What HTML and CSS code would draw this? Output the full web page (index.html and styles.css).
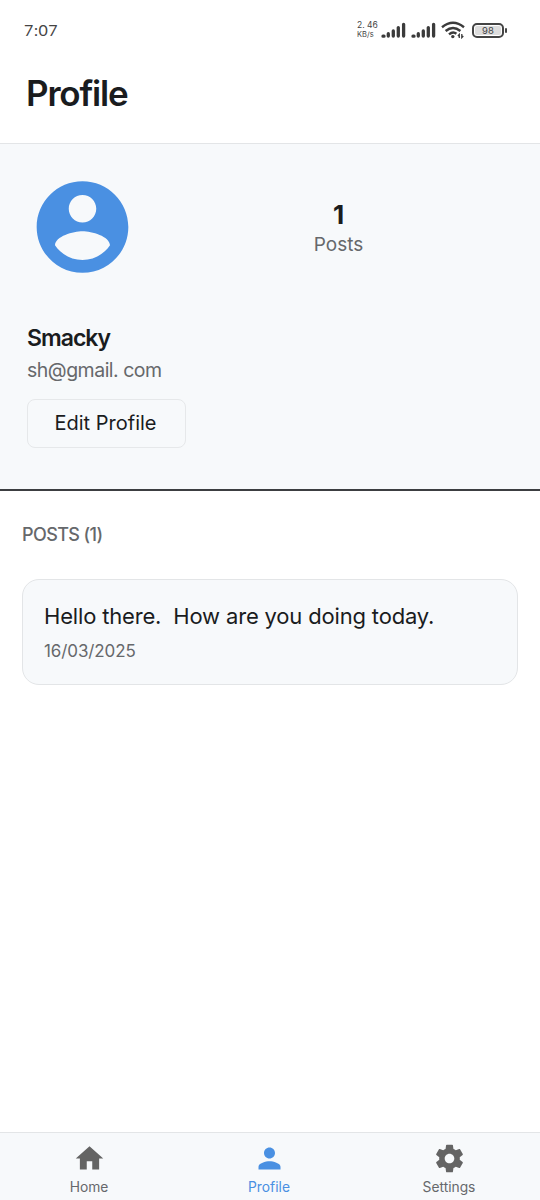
FILE: index.html
```html
<!DOCTYPE html>
<html lang="en">
<head>
<meta charset="utf-8">
<title>Profile</title>
<link rel="stylesheet" href="styles.css">
</head>
<body>
<div class="app">
  <div class="status">
    <span class="clock">7:07</span>
    <div class="indicators">
      <div class="speed"><span class="rate">2. 46</span><span class="unit">KB/s</span></div>
      <svg class="signal" width="25" height="16" viewBox="0 0 25 16"><path d="M2 14.200h1M7.300 14v-2.300M12.300 14V8.900M17.300 14V5.600M22.600 14V2.300"/></svg>
      <svg class="signal" width="25" height="16" viewBox="0 0 25 16"><path d="M2 14.200h1M7.300 14v-2.300M12.300 14V8.900M17.300 14V5.600M22.600 14V2.300"/></svg>
      <svg class="wifi" width="24" height="18" viewBox="0 0 24 18"><path d="M1 6.200Q12-2.800 23 6.200M4.600 10Q12 3.800 19.400 10M8 13.400Q12 10 15.400 12.800"/><circle cx="11.800" cy="15.600" r="1.700"/><path class="arrows" d="M18.300 17v-3.600l-1.400 1.600M20.800 13v3.600l1.500-1.600"/></svg>
      <div class="battery"><span>98</span></div>
    </div>
  </div>
  <header class="header"><h1 class="title">Profile</h1></header>
  <section class="profile">
    <div class="summary">
      <svg class="avatar" viewBox="0 0 24 24"><path fill="#4a90e2" fill-rule="evenodd" d="M12 2C6.480 2 2 6.480 2 12s4.480 10 10 10 10-4.480 10-10S17.520 2 12 2zm0 3c1.660 0 3 1.340 3 3s-1.340 3-3 3-3-1.340-3-3 1.340-3 3-3zm0 14.200c-2.500 0-4.710-1.280-6-3.220.03-1.990 4-3.080 6-3.080 1.990 0 5.970 1.090 6 3.080-1.290 1.940-3.500 3.220-6 3.220z"/></svg>
      <div class="stat"><strong class="count">1</strong><span class="stat-label">Posts</span></div>
    </div>
    <div class="name"><span>Smacky</span></div>
    <div class="email">sh@gmail. com</div>
    <button class="edit">Edit Profile</button>
  </section>
  <main class="posts">
    <h2 class="posts-title">POSTS (1)</h2>
    <article class="post">
      <p class="post-text">Hello there.&nbsp; How are you doing today.</p>
      <time class="post-date">16/03/2025</time>
    </article>
  </main>
  <nav class="tabs">
    <a class="tab"><svg class="tab-icon" viewBox="0 0 24 24"><path d="M10 20v-6h4v6h5v-8h3L12 3 2 12h3v8z"/></svg><span>Home</span></a>
    <a class="tab active"><svg class="tab-icon" viewBox="0 0 24 24"><path d="M12 12c2.210 0 4-1.790 4-4s-1.790-4-4-4-4 1.790-4 4 1.790 4 4 4zm0 2c-2.670 0-8 1.340-8 4v2h16v-2c0-2.660-5.330-4-8-4z"/></svg><span>Profile</span></a>
    <a class="tab"><svg class="tab-icon" viewBox="0 0 24 24"><path d="M19.430 12.980c.04-.32.070-.64.070-.98s-.03-.66-.07-.98l2.110-1.650c.19-.15.240-.42.120-.64l-2-3.460c-.12-.22-.39-.3-.61-.22l-2.490 1c-.52-.4-1.080-.73-1.690-.98l-.38-2.650C14.460 2.180 14.250 2 14 2h-4c-.25 0-.46.180-.49.420l-.38 2.650c-.61.250-1.170.590-1.690.980l-2.490-1c-.23-.09-.49 0-.61.220l-2 3.460c-.13.220-.07.490.120.640l2.110 1.650c-.04.320-.07.650-.07.980s.03.660.070.980l-2.110 1.650c-.19.150-.24.420-.12.640l2 3.460c.12.220.390.300.610.220l2.490-1c.52.400 1.080.730 1.690.980l.38 2.650c.03.240.240.420.490.420h4c.25 0 .46-.18.490-.42l.38-2.650c.61-.25 1.170-.59 1.690-.98l2.490 1c.23.090.490 0 .61-.22l2-3.460c.12-.22.070-.49-.12-.64l-2.110-1.650zM12 15.500c-1.930 0-3.500-1.570-3.500-3.500s1.570-3.500 3.500-3.500 3.500 1.570 3.500 3.500-1.570 3.500-3.500 3.500z"/></svg><span>Settings</span></a>
  </nav>
</div>
</body>
</html>
```
FILE: styles.css
```css
* { box-sizing: border-box; }
body { margin: 0; background: #fff; font-family: Inter, "Liberation Sans", sans-serif; color: #1a1c1e; }
h1, h2, p { margin: 0; }
.app { width: 540px; height: 1200px; display: flex; flex-direction: column; }
.status { height: 60px; padding: 0 33px 0 24px; display: flex; align-items: center; justify-content: space-between; color: #444; }
.clock { padding-bottom: 2px; font-family: Lato, sans-serif; font-size: 16px; letter-spacing: 0.6px; }
.indicators { display: flex; align-items: center; }
.speed { width: 24px; padding-bottom: 1px; display: flex; flex-direction: column; line-height: 9px; white-space: nowrap; }
.rate { font-size: 8.500px; }
.unit { font-size: 7.500px; }
.signal { margin-right: 5px; fill: none; stroke: #3b3b3b; stroke-width: 3.3; stroke-linecap: round; }
.wifi { margin-right: 7px; fill: none; stroke: #3b3b3b; stroke-width: 2.400; }
.wifi circle { fill: #3b3b3b; stroke: none; }
.wifi .arrows { stroke-width: 1.3; }
.battery { position: relative; width: 32px; height: 15px; margin-right: 3px; border: 2px solid #444; border-radius: 5px; padding: 1px; }
.battery span { display: block; height: 9px; border-radius: 2px; background: #ddd; font-size: 9.500px; line-height: 9px; text-align: center; }
.battery::after { content: ""; position: absolute; right: -5px; top: 3px; width: 2px; height: 5px; border-radius: 1px; background: #444; }
.header { height: 84px; padding: 11px 26px 0; border-bottom: 1px solid #e3e5e7; }
.title { font-size: 35px; line-height: 44px; font-weight: 600; letter-spacing: -1.2px; }
.profile { height: 347px; padding: 28px 27px 0; background: #f7f9fb; border-bottom: 2px solid #3c3e41; }
.summary { display: flex; align-items: center; height: 111px; }
.avatar { width: 111px; height: 110px; margin-bottom: 1px; flex: none; }
.stat { flex: 1; padding: 2px 0 0 26px; display: flex; flex-direction: column; align-items: center; }
.count { font-size: 26px; line-height: 32px; font-weight: 700; }
.stat-label { font-size: 19px; line-height: 28px; color: #66686b; }
.name { margin-top: 39px; font-size: 23px; line-height: 32px; font-weight: 600; letter-spacing: -1px; }
.email { font-size: 19.500px; line-height: 32px; color: #66686b; letter-spacing: -0.5px; }
.edit { display: block; margin-top: 13px; width: 159px; height: 49px; padding: 0 2px 0 0; border: 1.500px solid #e6e8ea; border-radius: 8px; background: transparent; color: #1a1c1e; font: 400 20px/45px Inter, sans-serif; }
.posts { flex: 1; padding: 30px 22px 0; }
.posts-title { font-size: 18px; line-height: 28px; font-weight: 500; color: #66686b; letter-spacing: -0.6px; }
.post { height: 106px; margin-top: 30px; padding: 20px 21px; border: 1px solid #e3e5e7; border-radius: 17px; background: #f7f9fb; }
.post-text { font-size: 22px; line-height: 32px; letter-spacing: -0.17px; white-space: nowrap; }
.post-date { display: block; margin-top: 6px; font-size: 17px; line-height: 26px; color: #66686b; letter-spacing: -0.1px; }
.tabs { height: 68px; display: grid; grid-template-columns: repeat(3, 1fr); background: #f7f9fb; border-top: 1px solid #e3e5e7; color: #66686b; }
.tab { display: flex; flex-direction: column; align-items: center; padding: 9px 2px 0 0; font-size: 13.800px; line-height: 20px; }
.tab-icon { width: 33px; height: 33px; margin-bottom: 2px; fill: #646464; }
.active { color: #4a90e2; }
.active .tab-icon { fill: #4a90e2; }
```
